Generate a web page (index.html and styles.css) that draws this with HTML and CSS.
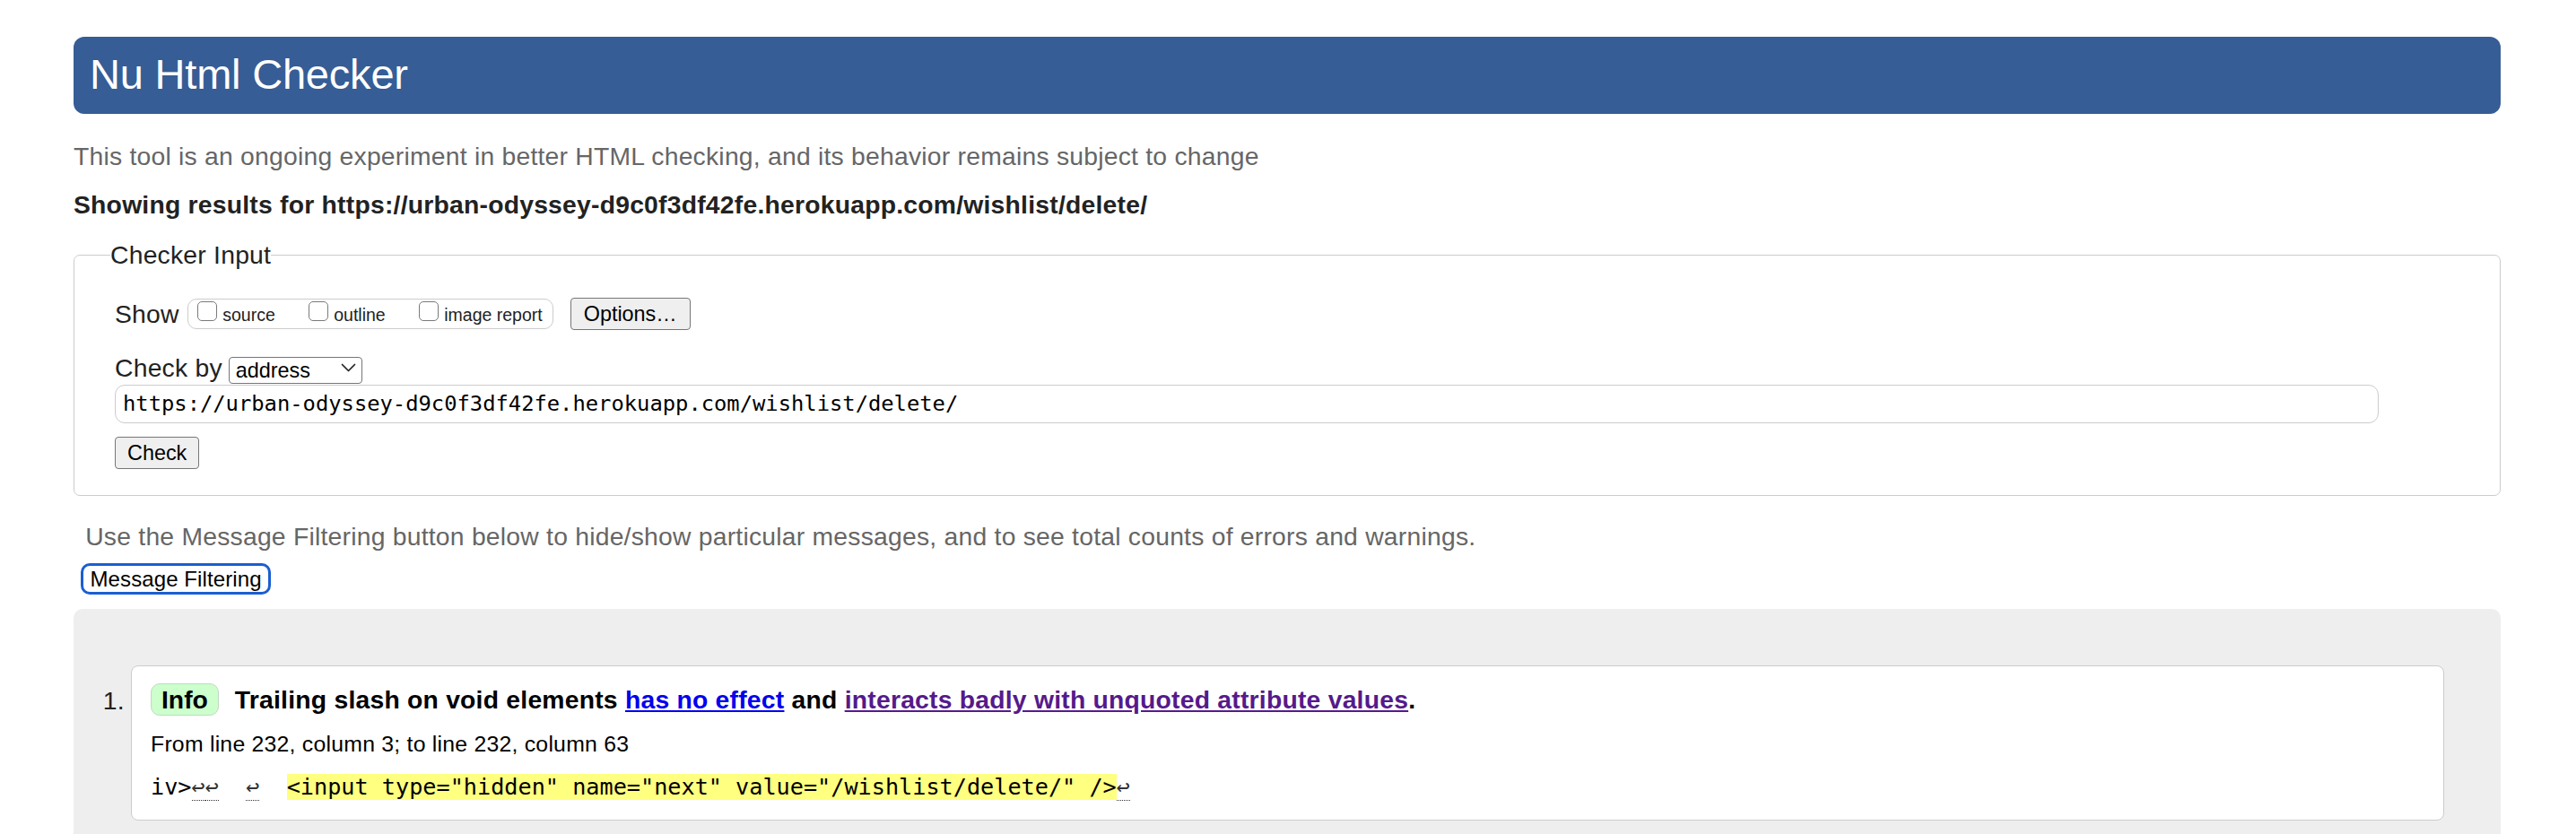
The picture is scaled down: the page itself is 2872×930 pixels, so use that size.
FILE: index.html
```html
<!DOCTYPE html>
<html lang="en">
<head>
<meta charset="utf-8">
<title>Nu Html Checker</title>
<link rel="stylesheet" href="styles.css">
</head>
<body>
<h1 class="title">Nu Html Checker</h1>
<p class="intro">This tool is an ongoing experiment in better HTML checking, and its behavior remains subject to change</p>
<p class="results-for">Showing results for https://urban-odyssey-d9c0f3df42fe.herokuapp.com/wishlist/delete/</p>
<form class="checker-form">
  <fieldset class="checker-input">
    <legend class="legend">Checker Input</legend>
    <div class="show-row">
      <span class="row-label">Show</span>
      <span class="show-options">
        <label class="opt"><input type="checkbox" class="cb"><span>source</span></label>
        <label class="opt"><input type="checkbox" class="cb"><span>outline</span></label>
        <label class="opt"><input type="checkbox" class="cb"><span>image report</span></label>
      </span>
      <button type="button" class="btn btn-options">Options…</button>
    </div>
    <div class="checkby-row">
      <label class="row-label">Check by</label>
      <span class="select-wrap">
        <select class="select"><option>address</option></select>
        <svg class="chev" width="17" height="10" viewBox="0 0 17 10" aria-hidden="true"><path d="M1.5 1.5 L8.5 8.5 L15.5 1.5" fill="none" stroke="#222" stroke-width="1.7" stroke-linecap="round" stroke-linejoin="round"/></svg>
      </span>
    </div>
    <input class="url" type="text" value="https://urban-odyssey-d9c0f3df42fe.herokuapp.com/wishlist/delete/">
    <button type="button" class="btn btn-check">Check</button>
  </fieldset>
</form>
<p class="filter-note">Use the Message Filtering button below to hide/show particular messages, and to see total counts of errors and warnings.</p>
<button type="button" class="btn-filter">Message Filtering</button>
<section class="results">
  <ol class="messages">
    <li class="message">
      <span class="num">1.</span>
      <div class="card">
        <p class="msg-title"><span class="badge">Info</span><span class="msg-text">Trailing slash on void elements <a class="link" href="#">has no effect</a> and <a class="link visited" href="#">interacts badly with unquoted attribute values</a>.</span></p>
        <p class="location">From line 232, column 3; to line 232, column 63</p>
        <p class="extract"><code class="code">iv&gt;<span class="lf">↩</span><span class="lf">↩</span>  <span class="lf">↩</span>  <mark class="hl">&lt;input type="hidden" name="next" value="/wishlist/delete/" /&gt;</mark><span class="lf">↩</span></code></p>
      </div>
    </li>
  </ol>
</section>
</body>
</html>
```
FILE: styles.css
```css
html {
  background: #fff;
  overflow: hidden;
}

body {
  margin: 0;
  padding: 41px 84px 0 82px;
  font-family: "Liberation Sans", Arial, Helvetica, sans-serif;
  font-size: 28.3px;
  line-height: 32px;
  letter-spacing: 0.23px;
  color: #222;
}

.title {
  margin: 0;
  height: 86px;
  box-sizing: border-box;
  padding: 0 0 0 18px;
  border-radius: 12px;
  background: #365d95;
  color: #fff;
  font-size: 47px;
  font-weight: normal;
  line-height: 83px;
  letter-spacing: -0.2px;
}

.intro {
  margin: 31.2px 0 0;
  color: #666;
}

.results-for {
  margin: 22.3px 0 0;
  font-weight: bold;
  color: #222;
}

.checker-form {
  margin: 24px 0 0;
}

.checker-input {
  margin: 0;
  min-width: 0;
  padding: 31.8px 45px 29px 45px;
  border: 1px solid #ccc;
  border-radius: 7px;
}

.legend {
  padding: 0;
  margin-left: -5px;
  font-size: 28.3px;
  line-height: 32px;
  color: #222;
}

.show-row {
  display: flex;
  align-items: center;
  height: 36px;
}

.row-label {
  line-height: 32px;
  color: #222;
}

.show-options {
  display: flex;
  align-items: baseline;
  box-sizing: border-box;
  height: 34px;
  margin-left: 9.5px;
  padding: 2px 11px 0 10px;
  border: 1px solid #ccc;
  border-radius: 10px;
  gap: 37.5px;
  font-size: 19.5px;
  line-height: 22px;
  letter-spacing: 0;
  color: #222;
}

.opt {
  display: flex;
  align-items: baseline;
}

.cb {
  -webkit-appearance: none;
  appearance: none;
  box-sizing: border-box;
  width: 22px;
  height: 22px;
  margin: 0 6px 0 0;
  border: 1.3px solid #7a7a7a;
  border-radius: 5px;
  background: #fff;
}

.btn {
  box-sizing: border-box;
  height: 36px;
  padding: 0 14px;
  border: 1px solid #767676;
  border-radius: 4px;
  background: #efefef;
  color: #000;
  font-family: "Liberation Sans", Arial, Helvetica, sans-serif;
  font-size: 23.4px;
  line-height: 1;
  letter-spacing: 0;
}

.btn-options {
  margin-left: 19px;
}

.checkby-row {
  display: flex;
  align-items: center;
  height: 32px;
  margin-top: 26.2px;
}

.select-wrap {
  position: relative;
  display: inline-block;
  margin-left: 7px;
  height: 30px;
}

.select {
  -webkit-appearance: none;
  appearance: none;
  box-sizing: border-box;
  width: 149px;
  height: 30px;
  padding: 0 0 0 7px;
  border: 1px solid #767676;
  border-radius: 4px;
  background: #fff;
  color: #000;
  font-family: "Liberation Sans", Arial, Helvetica, sans-serif;
  font-size: 23.4px;
  letter-spacing: 0;
}

.chev {
  position: absolute;
  right: 7px;
  top: 10px;
  pointer-events: none;
}

.url {
  display: block;
  box-sizing: border-box;
  width: calc(100% - 90px);
  height: 42.4px;
  margin: 2.8px 0 0;
  padding: 0 8px;
  border: 1px solid #ccc;
  border-radius: 11px;
  background: #fff;
  color: #000;
  font-family: "DejaVu Sans Mono", Menlo, monospace;
  font-size: 23.8px;
  letter-spacing: 0;
}

.btn-check {
  display: block;
  margin-top: 15.6px;
  padding: 0 13px;
}

.filter-note {
  margin: 29.2px 0 0 13.2px;
  color: #666;
}

.btn-filter {
  display: block;
  box-sizing: border-box;
  height: 35.5px;
  margin: 13.5px 0 0 8px;
  padding: 0 7.5px;
  border: 3px solid #1a5fd1;
  border-radius: 10px;
  background: #fff;
  color: #000;
  font-family: "Liberation Sans", Arial, Helvetica, sans-serif;
  font-size: 24px;
  line-height: 1;
  letter-spacing: 0.1px;
}

.results {
  margin-top: 15.5px;
  padding: 63px 63px 63px 0;
  background: #eee;
  border-radius: 10px 10px 0 0;
}

.messages {
  list-style: none;
  margin: 0;
  padding: 0;
}

.message {
  display: flex;
  align-items: flex-start;
}

.num {
  flex: 0 0 64px;
  box-sizing: border-box;
  margin-top: 22.9px;
  padding-right: 7.2px;
  text-align: right;
  line-height: 32px;
  color: #222;
}

.card {
  flex: 1;
  min-width: 0;
  padding: 19.3px 21px 21px;
  border: 1px solid #ccc;
  border-radius: 8px;
  background: #fff;
}

.msg-title {
  display: flex;
  align-items: center;
  min-height: 36px;
  margin: 0;
  font-weight: bold;
  color: #000;
}

.badge {
  box-sizing: border-box;
  height: 36px;
  margin-right: 18px;
  padding: 0 11px;
  border: 1px solid #c2d9c2;
  border-radius: 10px;
  background: #ccffcc;
  line-height: 34px;
  letter-spacing: 0;
}

.msg-text {
  line-height: 32px;
}

.link {
  color: #0000ee;
  text-decoration: underline;
}

.link.visited {
  color: #551a8b;
}

.location {
  margin: 17.4px 0 0;
  font-size: 24.8px;
  line-height: 28px;
  color: #000;
}

.extract {
  margin: 16.4px 0 0;
  line-height: normal;
  white-space: pre;
  letter-spacing: 0;
}

.code {
  font-family: "DejaVu Sans Mono", Menlo, monospace;
  font-size: 25.2px;
  color: #000;
}

.hl {
  background: #ffff80;
  color: #000;
}

.lf {
  color: #333;
  border-bottom: 1px dotted #333;
}
```
